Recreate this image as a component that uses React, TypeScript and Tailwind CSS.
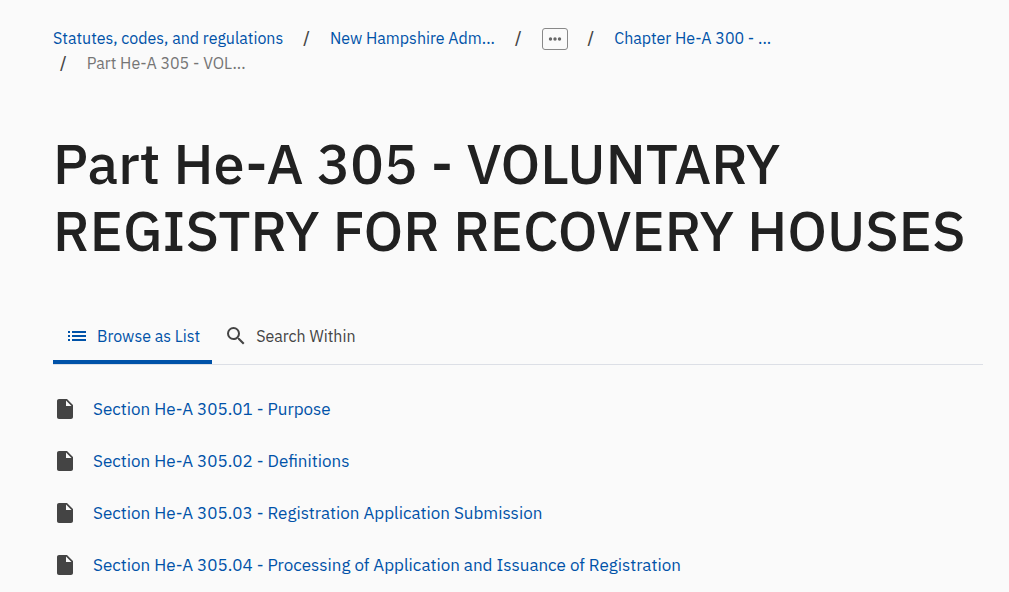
import React, { useState } from "react";
import { MdInsertDriveFile, MdList, MdSearch } from "react-icons/md";

const sections = [
  "Section He-A 305.01 - Purpose",
  "Section He-A 305.02 - Definitions",
  "Section He-A 305.03 - Registration Application Submission",
  "Section He-A 305.04 - Processing of Application and Issuance of Registration",
];

const tabs = [
  { label: "Browse as List", Icon: MdList },
  { label: "Search Within", Icon: MdSearch },
];

function Slash() {
  return <span aria-hidden="true" className="px-5 font-medium text-[#444444]">/</span>;
}

export default function App() {
  const [active, setActive] = useState("Browse as List");

  return (
    <div className="min-h-screen bg-[#fafafa] pt-[26px] pr-[26px] pl-[53px] font-['IBM_Plex_Sans','Roboto',sans-serif] text-[#212121]">
      <nav aria-label="Breadcrumb" className="flex max-w-[750px] flex-wrap text-base leading-[25px]">
        <a href="#statutes" className="text-[#0052a8] hover:underline">Statutes, codes, and regulations</a>
        <Slash />
        <a href="#new-hampshire" className="text-[#0052a8] hover:underline">New Hampshire Adm...</a>
        <Slash />
        <button
          type="button"
          aria-label="Show hidden levels"
          className="flex h-[22px] w-[26px] items-center justify-center self-center rounded-[3px] border border-[#888888] bg-[#fafafa]"
        >
          <svg width="14" height="4" viewBox="0 0 14 4" fill="#666666">
            <circle cx="2.5" cy="2" r="1.7" />
            <circle cx="7" cy="2" r="1.7" />
            <circle cx="11.5" cy="2" r="1.7" />
          </svg>
        </button>
        <Slash />
        <a href="#chapter" className="text-[#0052a8] hover:underline">Chapter He-A 300 - ...</a>
        <span className="flex basis-full">
          <span aria-hidden="true" className="pr-5 pl-[7px] font-medium text-[#444444]">/</span>
          <span aria-current="page" className="text-[#757575]">Part He-A 305 - VOL...</span>
        </span>
      </nav>

      <h1 className="mt-[54px] text-[56px] leading-[67px] font-medium">
        Part He-A 305 - VOLUNTARY REGISTRY FOR RECOVERY HOUSES
      </h1>

      <div role="tablist" className="mt-12 flex border-b border-[#dcdfe6]">
        {tabs.map(({ label, Icon }) => (
          <button
            key={label}
            type="button"
            role="tab"
            aria-selected={active === label}
            onClick={() => setActive(label)}
            className={
              active === label
                ? "flex h-[52px] items-center gap-2 border-b-4 border-[#0052a8] px-3 text-base text-[#0052a8]"
                : "flex h-[52px] items-center gap-2 border-b-4 border-transparent px-3 text-base text-[#444444]"
            }
          >
            <Icon size={24} />
            {label}
          </button>
        ))}
      </div>

      <ul className="mt-[18px]">
        {sections.map((section, i) => (
          <li key={section} className="flex h-[52px] items-center gap-4">
            <MdInsertDriveFile size={24} className="shrink-0 text-[#444444]" />
            <a href={`#section-${i + 1}`} className="text-[17px] leading-6 text-[#0052a8] hover:underline">
              {section}
            </a>
          </li>
        ))}
      </ul>
    </div>
  );
}
